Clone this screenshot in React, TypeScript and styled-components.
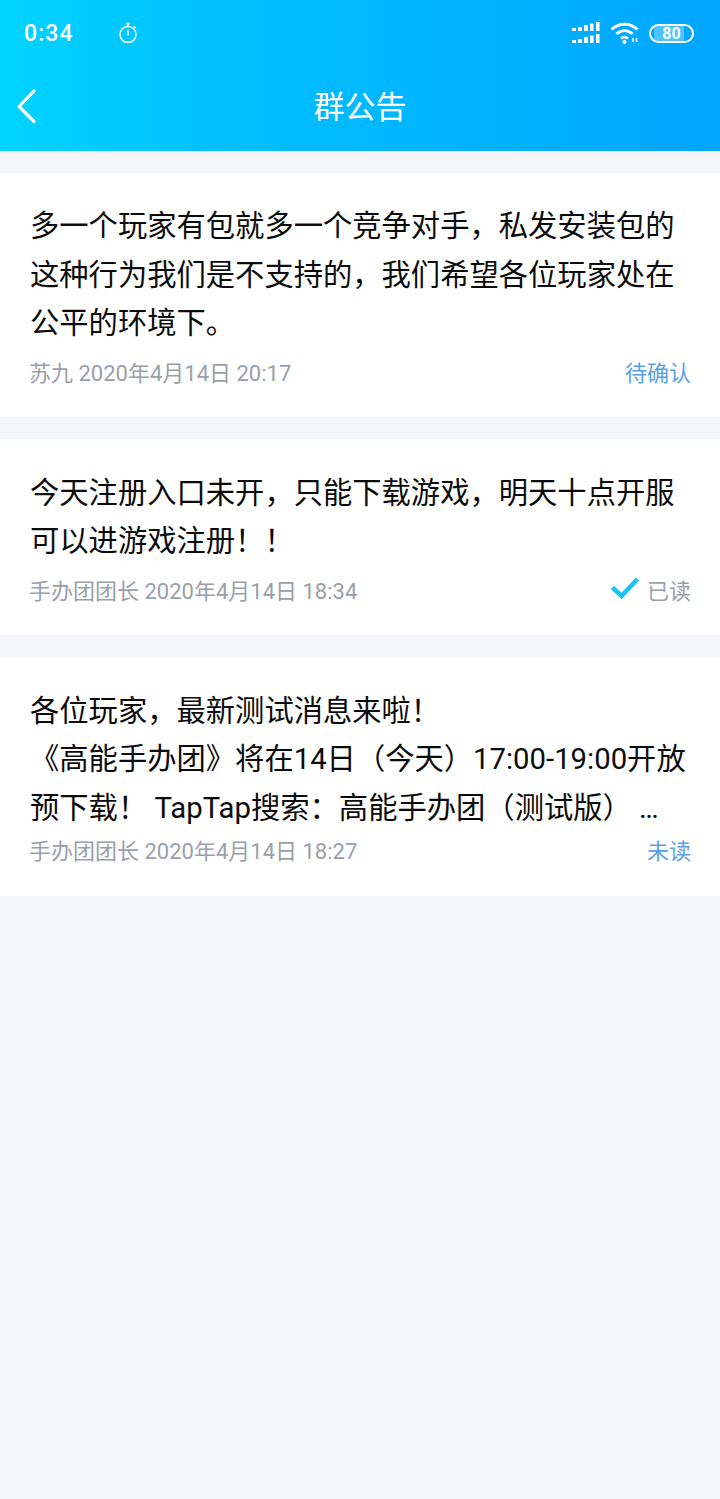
import React from "react";
import styled, { createGlobalStyle } from "styled-components";

const GlobalStyle = createGlobalStyle`
  html, body {
    margin: 0;
    padding: 0;
    background: #f4f6fa;
  }
  body {
    font-family: "Roboto", "Noto Sans CJK SC", sans-serif;
  }
`;

const Page = styled.div`
  width: 720px;
  min-height: 1499px;
  background: #f4f6fa;
`;

const Header = styled.header`
  height: 151px;
  background: linear-gradient(90deg, #00d4ff 0%, #00c0ff 30%, #00a6ff 100%);
  color: #fff;
`;

const StatusBar = styled.div`
  height: 66px;
  display: flex;
  align-items: center;
  padding: 0 26px 0 24px;
`;

const Clock = styled.span`
  width: 94px;
  font-size: 23px;
  font-weight: 500;
  letter-spacing: 1.1px;
`;

const StatusIcons = styled.div`
  margin-left: auto;
  display: flex;
  align-items: center;
  gap: 9px;
`;

const Battery = styled.div`
  width: 45px;
  height: 19px;
  box-sizing: border-box;
  border: 2px solid #fff;
  border-radius: 10px;
  display: flex;
  align-items: center;
  justify-content: center;
  font-size: 16px;
  font-weight: 700;
  background: linear-gradient(90deg, transparent 8%, rgba(255, 255, 255, 0.3) 8%, rgba(255, 255, 255, 0.3) 80%, transparent 80%);
`;

const NavBar = styled.div`
  height: 85px;
  display: flex;
  align-items: center;
  justify-content: center;
  position: relative;
`;

const BackButton = styled.button`
  position: absolute;
  left: 16px;
  top: 22px;
  padding: 0;
  border: none;
  background: none;
  display: flex;
`;

const Title = styled.h1`
  margin: 0 0 8px;
  font-size: 31px;
  font-weight: 400;
`;

const List = styled.main`
  display: flex;
  flex-direction: column;
  gap: 22px;
  padding-top: 22px;
`;

const Card = styled.article<{ $top: number }>`
  background: #fff;
  padding: ${(p) => p.$top}px 29px 31px 30px;
`;

const Body = styled.p`
  margin: 0;
  font-size: 29.3px;
  line-height: 48.5px;
  color: #0b0b0b;
  white-space: pre-line;
`;

const Meta = styled.div<{ $tight?: boolean }>`
  margin: ${(p) => (p.$tight ? "2px 0 0.5px" : "8px 0 0")};
  height: 30px;
  display: flex;
  align-items: center;
  justify-content: space-between;
  font-size: 22px;
  color: #9a9fa9;
`;

const Author = styled.span`
  margin-left: -1px;
`;

const Status = styled.span<{ $accent?: boolean }>`
  display: flex;
  align-items: center;
  gap: 8px;
  color: ${(p) => (p.$accent ? "#5a9fe6" : "#9a9fa9")};

  svg {
    margin-top: -1px;
  }
`;

function Stopwatch() {
  return (
    <svg width="20" height="22" viewBox="0 0 20 22" fill="none" stroke="#fff" strokeWidth="1.5">
      <circle cx="10" cy="12.5" r="8" />
      <path d="M10 8.500v4.500" strokeLinecap="round" />
      <path d="M8 1.500h4M10 1.500v3M16 4.500l1.500 1.500" />
    </svg>
  );
}

function Signal() {
  return (
    <svg width="29" height="22" viewBox="0 0 29 22" fill="#fff">
      {[0, 12].map((y) => (
        <g key={y}>
          <rect x="0" y={y + 6} width="4" height="3" />
          <rect x="6" y={y + 5} width="4" height="4" />
          <rect x="12" y={y + 3} width="4" height="6" />
          <rect x="18" y={y + 1.5} width="3.500" height="7.500" />
          <rect x="24" y={y} width="3.500" height="9" />
        </g>
      ))}
    </svg>
  );
}

function Wifi() {
  return (
    <svg width="30" height="24" viewBox="0 0 30 24" fill="none" stroke="#fff" strokeWidth="3">
      <path d="M1.500 8.500C9 1.500 20 1.500 27.500 8.500" />
      <path d="M6.500 13c5-4.500 11-4.500 16 0" />
      <path d="M11 17.500c2.500-2 4.500-2 7 0" strokeWidth="2.500" />
      <circle cx="14.500" cy="21" r="2" fill="#fff" stroke="none" />
      <path d="M23 21v-4M26.500 17v4" strokeWidth="1.500" />
    </svg>
  );
}

function Back() {
  return (
    <svg width="22" height="38" viewBox="0 0 22 38" fill="none" stroke="#fff" strokeWidth="3.2" strokeLinecap="round" strokeLinejoin="round">
      <path d="M18 3 3 18.500l15 15" />
    </svg>
  );
}

function Check() {
  return (
    <svg width="28" height="22" viewBox="0 0 28 22" fill="none" stroke="#1cc2f4" strokeWidth="4.5">
      <path d="M1.500 10.500 10.500 19 26.500 2" />
    </svg>
  );
}

type Notice = {
  body: string;
  author: string;
  status: string;
  top: number;
  accent?: boolean;
  read?: boolean;
  tight?: boolean;
};

const notices: Notice[] = [
  {
    body: "多一个玩家有包就多一个竞争对手，私发安装包的\n这种行为我们是不支持的，我们希望各位玩家处在\n公平的环境下。",
    author: "苏九 2020年4月14日 20:17",
    status: "待确认",
    top: 29,
    accent: true,
  },
  {
    body: "今天注册入口未开，只能下载游戏，明天十点开服\n可以进游戏注册！！",
    author: "手办团团长 2020年4月14日 18:34",
    status: "已读",
    top: 30,
    read: true,
  },
  {
    body: "各位玩家，最新测试消息来啦！\n《高能手办团》将在14日（今天）17:00-19:00开放\n预下载！ TapTap搜索：高能手办团（测试版） …",
    author: "手办团团长 2020年4月14日 18:27",
    status: "未读",
    top: 30,
    accent: true,
    tight: true,
  },
];

export default function App() {
  return (
    <Page>
      <GlobalStyle />
      <Header>
        <StatusBar>
          <Clock>0:34</Clock>
          <Stopwatch />
          <StatusIcons>
            <Signal />
            <Wifi />
            <Battery>80</Battery>
          </StatusIcons>
        </StatusBar>
        <NavBar>
          <BackButton aria-label="back">
            <Back />
          </BackButton>
          <Title>群公告</Title>
        </NavBar>
      </Header>
      <List>
        {notices.map((n) => (
          <Card key={n.author} $top={n.top}>
            <Body>{n.body}</Body>
            <Meta $tight={n.tight}>
              <Author>{n.author}</Author>
              <Status $accent={n.accent}>
                {n.read && <Check />}
                {n.status}
              </Status>
            </Meta>
          </Card>
        ))}
      </List>
    </Page>
  );
}
